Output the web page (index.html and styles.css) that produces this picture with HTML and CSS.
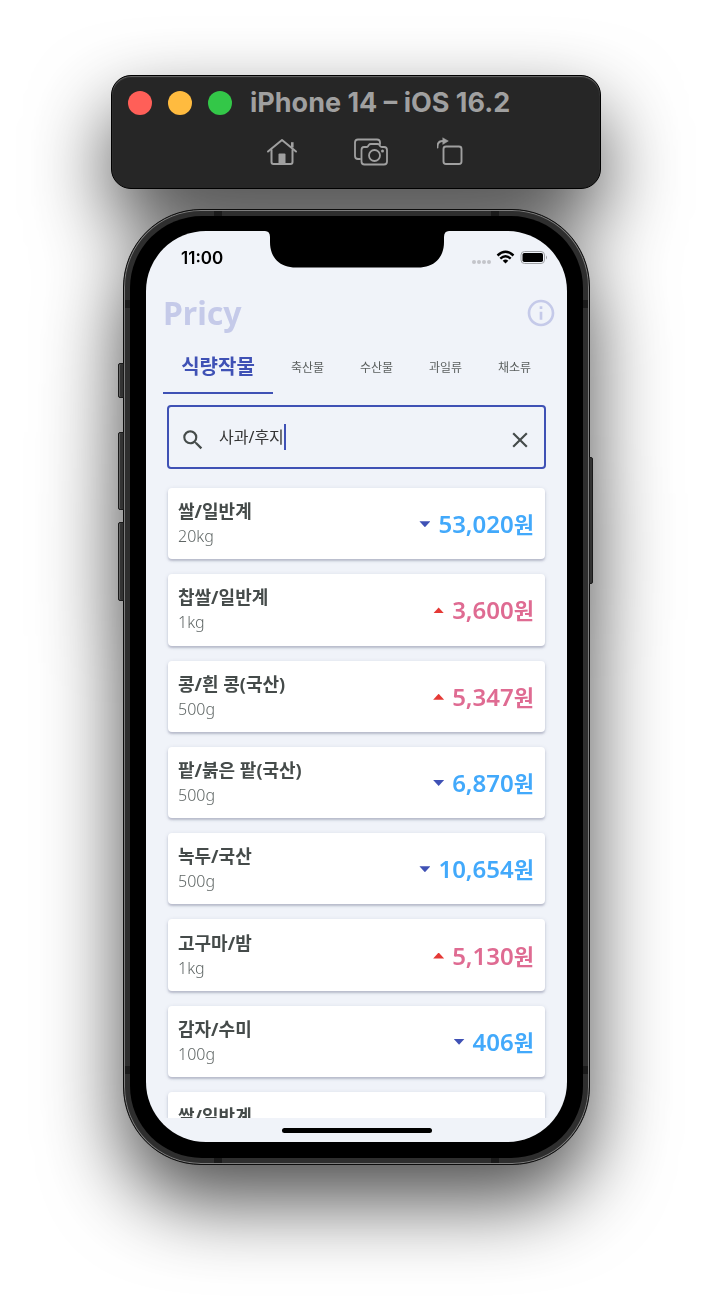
FILE: index.html
```html
<!DOCTYPE html>
<html lang="ko">
<head>
<meta charset="utf-8">
<meta name="viewport" content="width=device-width, initial-scale=1">
<title>Pricy</title>
<link rel="stylesheet" href="styles.css">
</head>
<body>
<main class="stage">
  <header class="toolbar">
    <div class="toolbar-top">
      <div class="lights">
        <button class="light close" aria-label="Close"></button>
        <button class="light minimize" aria-label="Minimize"></button>
        <button class="light expand" aria-label="Zoom"></button>
      </div>
      <h1 class="device-name">iPhone 14 – iOS 16.2</h1>
    </div>
    <div class="toolbar-actions">
      <button class="tool" aria-label="Home">
        <svg width="46" height="30" viewBox="-6 0 46 30" fill="none" stroke="#a0a0a0" stroke-width="2" stroke-linecap="round" stroke-linejoin="round"><path d="M3 14.500L17 3L31 14.500"/><path d="M6.500 13V25Q6.500 27 8.500 27H25.500Q27.500 27 27.500 25V13"/><path d="M27.300 10.500V5.200" stroke-width="2.600" stroke-linecap="butt"/><path d="M13.500 27V17.500Q13.500 16.500 14.500 16.500H19.500Q20.500 16.500 20.500 17.500V27Z" fill="#a0a0a0" stroke="none"/></svg>
      </button>
      <button class="tool" aria-label="Screenshot">
        <svg width="34" height="30" viewBox="0 0 34 30" fill="none" stroke="#a0a0a0" stroke-width="1.800" stroke-linecap="round" stroke-linejoin="round"><path d="M6 22H4Q1 22 1 19V5.500Q1 2.500 4 2.500H23Q26 2.500 26 5.500V7"/><path d="M10 10H12.500Q13.500 10 14 9.200L14.800 8Q15.500 7 16.800 7H23.500Q24.800 7 25.500 8L26.200 9.200Q26.800 10 27.800 10H30Q33 10 33 13V24.500Q33 27.500 30 27.500H10.500Q7.500 27.500 7.500 24.500V13Q7.500 10 10 10Z"/><circle cx="20.500" cy="18.500" r="5.500"/><circle cx="28.500" cy="14" r="1.500" fill="#a0a0a0" stroke="none"/></svg>
      </button>
      <button class="tool" aria-label="Rotate">
        <svg width="26" height="30" viewBox="4 0 26 30" fill="none" stroke="#a0a0a0" stroke-width="1.900" stroke-linecap="round" stroke-linejoin="round"><rect x="10.500" y="9.500" width="18" height="17.500" rx="2.500"/><path d="M4.500 10.500V9.500Q4.500 4 10 4H11"/><path d="M10 1L15.300 4L10 7.200Z" fill="#a0a0a0" stroke-width="0.600"/></svg>
      </button>
    </div>
  </header>

  <section class="phone">
    <span class="side-key mute"></span>
    <span class="side-key volume-up"></span>
    <span class="side-key volume-down"></span>
    <span class="side-key power"></span>
    <div class="bezel">
      <div class="screen">
        <div class="status">
          <span class="time">11:00</span>
          <svg class="notch" width="184" height="37" viewBox="0 0 184 37"><path d="M0 0Q5 0 5 6V11C5 27 15 36.500 31 36.500H153C169 36.500 179 27 179 11V6Q179 0 184 0Z"/></svg>
          <span class="signals">
            <svg width="76" height="16" viewBox="0 0 76 16"><g fill="#c3c5ca"><circle cx="2" cy="12" r="2"/><circle cx="7" cy="12" r="2"/><circle cx="12" cy="12" r="2"/><circle cx="17" cy="12" r="2"/></g><g fill="none" stroke="#000" stroke-width="2.400"><path d="M25.500 5.500Q33.500 -1.800 41.500 5.500"/><path d="M28.300 8.600Q33.500 3.700 38.700 8.600"/></g><path d="M30.700 10.700Q33.500 8.300 36.300 10.700L33.500 13.500Z"/><rect x="49" y="1.500" width="23.500" height="12" rx="3.500" fill="none" stroke="#9fa1a5"/><rect x="50.500" y="3" width="20.500" height="9" rx="1.800"/><path d="M74 5.500Q76 7.500 74 9.500Z" fill="#9fa1a5"/></svg>
          </span>
        </div>
        <div class="app-head">
          <h2 class="brand">Pricy</h2>
          <button class="info" aria-label="정보">
            <svg width="32" height="32" viewBox="0 0 24 24" fill="#c5cae9"><path d="M11 7h2v2h-2zm0 4h2v6h-2zm1-9C6.480 2 2 6.480 2 12s4.480 10 10 10 10-4.480 10-10S17.520 2 12 2zm0 18c-4.410 0-8-3.590-8-8s3.590-8 8-8 8 3.590 8 8-3.590 8-8 8z"/></svg>
          </button>
        </div>
        <nav class="tabs">
          <button class="tab active">식량작물</button>
          <button class="tab">축산물</button>
          <button class="tab">수산물</button>
          <button class="tab">과일류</button>
          <button class="tab">채소류</button>
        </nav>
        <div class="search">
          <label class="search-icon" for="query" aria-label="검색">
            <svg width="26" height="26" viewBox="0 0 24 24" fill="#454b4a"><path d="M15.500 14h-.790l-.280-.270A6.471 6.471 0 0 0 16 9.500 6.500 6.500 0 1 0 9.500 16c1.610 0 3.090-.590 4.230-1.570l.270.280v.790l5 4.990L20.490 19l-4.990-5zm-6 0C7.010 14 5 11.990 5 9.500S7.010 5 9.500 5 14 7.010 14 9.500 11.990 14 9.500 14z"/></svg>
          </label>
          <input class="query" id="query" type="text" value="사과/후지">
          <span class="cursor"></span>
          <button class="clear" aria-label="지우기">
            <svg width="26" height="26" viewBox="0 0 24 24" fill="#454b4a"><path d="M19 6.410L17.590 5 12 10.590 6.410 5 5 6.410 10.590 12 5 17.590 6.410 19 12 13.410 17.590 19 19 17.590 13.410 12z"/></svg>
          </button>
        </div>
        <ul class="list">
          <li class="card"><div><h3 class="name">쌀/일반계</h3><p class="unit">20kg</p></div><p class="price down"><span>53,020<span class="won">원</span></span></p></li>
          <li class="card"><div><h3 class="name">찹쌀/일반계</h3><p class="unit">1kg</p></div><p class="price up"><span>3,600<span class="won">원</span></span></p></li>
          <li class="card"><div><h3 class="name">콩/흰 콩(국산)</h3><p class="unit">500g</p></div><p class="price up"><span>5,347<span class="won">원</span></span></p></li>
          <li class="card"><div><h3 class="name">팥/붉은 팥(국산)</h3><p class="unit">500g</p></div><p class="price down"><span>6,870<span class="won">원</span></span></p></li>
          <li class="card"><div><h3 class="name">녹두/국산</h3><p class="unit">500g</p></div><p class="price down"><span>10,654<span class="won">원</span></span></p></li>
          <li class="card"><div><h3 class="name">고구마/밤</h3><p class="unit">1kg</p></div><p class="price up"><span>5,130<span class="won">원</span></span></p></li>
          <li class="card"><div><h3 class="name">감자/수미</h3><p class="unit">100g</p></div><p class="price down"><span>406<span class="won">원</span></span></p></li>
          <li class="card peek"><h3 class="name">쌀/일반계</h3></li>
        </ul>
        <div class="home-bar"></div>
      </div>
    </div>
  </section>
</main>
</body>
</html>
```
FILE: styles.css
```css
* {
  box-sizing: border-box;
}

body {
  margin: 0;
  background: #fff;
  font-family: "Noto Sans", "Noto Sans CJK KR", sans-serif;
}

h1, h2, h3, p, ul {
  margin: 0;
  padding: 0;
}

button {
  margin: 0;
  padding: 0;
  border: 0;
  background: none;
  font: inherit;
}

svg {
  display: block;
}

.stage {
  display: flex;
  flex-direction: column;
  gap: 20px;
  height: 100vh;
  min-height: 1200px;
  max-width: 712px;
  margin: 0 auto;
  padding: 75px 111px 149px;
  filter: drop-shadow(0 36px 40px rgba(0, 0, 0, 0.7));
}

/* simulator toolbar */
.toolbar {
  flex: none;
  padding: 11px 16px 21px;
  border: 1px solid #000;
  border-radius: 20px;
  background: #262626;
  box-shadow: inset 0 1px 1px #6a6a6a;
}

.toolbar-top {
  display: flex;
  align-items: center;
  gap: 18px;
}

.lights {
  display: flex;
  gap: 16px;
}

.light {
  width: 24px;
  height: 24px;
  border-radius: 50%;
}

.close { background: #ff5f58; }
.minimize { background: #ffbb3f; }
.expand { background: #33c748; }

.device-name {
  color: #a0a0a0;
  font: 700 27px/32px Inter, sans-serif;
  white-space: nowrap;
}

.toolbar-actions {
  display: flex;
  justify-content: center;
  gap: 49px;
  margin-top: 18px;
  padding-left: 10px;
}

/* phone body */
.phone {
  position: relative;
  flex: 1;
  display: flex;
  min-height: 0;
  margin: 0 11px 0 12px;
  padding: 6px;
  border: 1px solid #0c0c0c;
  border-radius: 78px;
  background:
    linear-gradient(#1a1a1a, #1a1a1a) left 90px top 0 / 8px 100% no-repeat,
    linear-gradient(#1a1a1a, #1a1a1a) right 90px top 0 / 8px 100% no-repeat,
    linear-gradient(#1a1a1a, #1a1a1a) left 0 top 90px / 100% 8px no-repeat,
    linear-gradient(#1a1a1a, #1a1a1a) left 0 bottom 90px / 100% 8px no-repeat,
    #2e2e2e;
  box-shadow: inset 0 0 0 1px #7d7d7d;
}

.side-key {
  position: absolute;
  left: -6px;
  width: 6px;
  border: 1px solid #1a1a1a;
  border-radius: 2px 0 0 2px;
  background: #333;
  box-shadow: inset 1px 0 #666;
}

.mute { top: 153px; height: 35px; }
.volume-up { top: 222px; height: 78px; }
.volume-down { top: 312px; height: 79px; }

.power {
  top: 247px;
  right: -4px;
  left: auto;
  width: 4px;
  height: 127px;
  border-radius: 0 2px 2px 0;
  box-shadow: none;
}

.bezel {
  flex: 1;
  display: flex;
  min-width: 0;
  padding: 15px 16px 16px;
  border-radius: 72px;
  background: #000;
}

.screen {
  flex: 1;
  display: flex;
  flex-direction: column;
  min-width: 0;
  overflow: hidden;
  border-radius: 60px;
  background: #f0f3f9;
}

/* status bar */
.status {
  flex: none;
  display: grid;
  grid-template-columns: 1fr auto 1fr;
  height: 52px;
}

.time {
  padding: 16px 0 0 35px;
  color: #000;
  font: 600 17px/22px Inter, sans-serif;
}

.signals {
  justify-self: end;
  padding: 19px 19px 0 0;
}

/* header and tabs */
.app-head {
  flex: none;
  display: flex;
  align-items: center;
  justify-content: space-between;
  height: 59px;
  padding: 0 10px 0 17px;
}

.brand {
  color: #c5cae9;
  font-size: 32px;
  font-weight: 700;
  line-height: 44px;
}

.tabs {
  flex: none;
  display: flex;
  height: 52px;
  padding: 0 18px 0 17px;
}

.tab {
  flex: 69 1 0;
  border-bottom: 2px solid transparent;
  color: #5a5f5e;
  font-size: 12px;
  white-space: nowrap;
}

.tab.active {
  flex-grow: 110;
  padding-bottom: 4px;
  border-color: #3f51b5;
  color: #3f51b5;
  font-size: 20px;
  font-weight: 700;
}

/* search */
.search {
  flex: none;
  display: flex;
  align-items: center;
  height: 64px;
  margin: 11px 21px 0;
  padding: 0 11px;
  border: 2px solid #3f51b5;
  border-radius: 4px;
}

.search-icon {
  padding-top: 5px;
}

.query {
  field-sizing: content;
  min-width: 0;
  margin-left: 13px;
  padding: 0;
  border: 0;
  outline: 0;
  background: none;
  color: #333;
  font: 400 16px/24px "Noto Sans", "Noto Sans CJK KR", sans-serif;
}

.cursor {
  flex: none;
  width: 2px;
  height: 26px;
  background: #3f51b5;
}

.clear {
  margin-left: auto;
  padding-top: 5px;
}

/* price list */
.list {
  flex: 1;
  display: grid;
  grid-template-rows: repeat(7, 1fr) 26px;
  gap: 15px;
  min-height: 0;
  margin-top: 13px;
  padding: 6px 22px 0;
  overflow: hidden;
  list-style: none;
}

.card {
  display: flex;
  align-items: center;
  justify-content: space-between;
  min-height: 0;
  padding: 1px 11px 0 10px;
  border-radius: 4px;
  background: #fff;
  box-shadow: 0 2px 2px rgba(70, 75, 110, 0.25), 0 1px 4px rgba(70, 75, 110, 0.16);
}

.card.peek {
  align-items: flex-start;
  padding-top: 12px;
  border-radius: 4px 4px 0 0;
  overflow: hidden;
}

.name {
  color: #454b4a;
  font-size: 18px;
  font-weight: 700;
  line-height: 25px;
}

.unit {
  color: #5f6665;
  font-size: 16px;
  font-weight: 300;
  line-height: 25px;
}

.price {
  display: flex;
  align-items: center;
  gap: 8px;
  font-size: 24px;
  font-weight: 600;
  line-height: 32px;
}

.won {
  font-size: 22px;
}

.price::before {
  content: "";
  width: 11px;
  height: 6px;
}

.price.down {
  color: #42a9fb;
}

.price.down::before {
  background: #3f51b5;
  clip-path: polygon(0 0, 100% 0, 50% 100%);
}

.price.up {
  color: #df6b92;
}

.price.up::before {
  background: #e53935;
  clip-path: polygon(0 100%, 100% 100%, 50% 0);
}

.home-bar {
  flex: none;
  align-self: center;
  width: 150px;
  height: 5px;
  margin: 10px 0 9px;
  border-radius: 3px;
  background: #000;
}
```
